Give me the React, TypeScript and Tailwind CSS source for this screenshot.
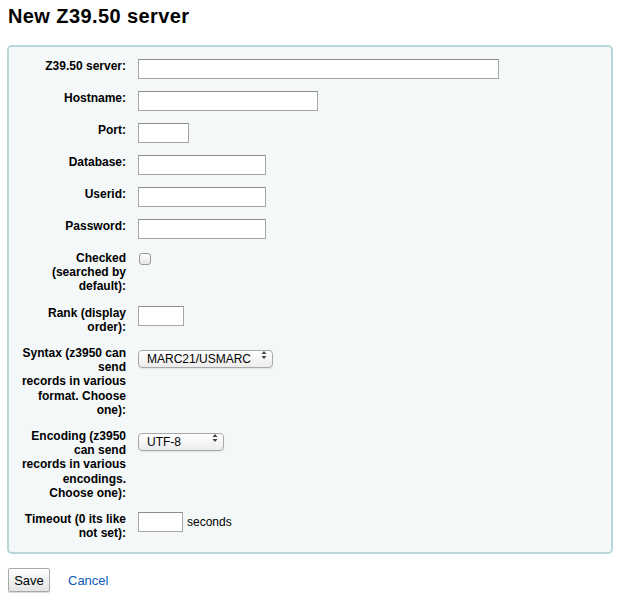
import { ReactNode } from "react";

const font = { fontFamily: '"Liberation Sans", Arial, sans-serif' };

interface RowProps {
  label: ReactNode;
  children: ReactNode;
}

const Row = ({ label, children }: RowProps) => (
  <li className="flex items-start">
    <label className="w-[117px] shrink-0 text-right text-[12px] font-bold leading-[14.2px] text-[#000]">
      {label}
    </label>
    <div className="ml-[12px] flex items-center">{children}</div>
  </li>
);

const TextInput = ({ width }: { width: string }) => (
  <input
    type="text"
    className={`${width} h-[20px] border border-[#a6a6a6] border-t-[#8e8e8e] bg-white px-1 text-[12px] outline-none`}
  />
);

const Select = ({ value, width }: { value: string; width: string }) => (
  <div className={`relative ${width}`}>
    <select
      defaultValue={value}
      className="h-[18px] w-full appearance-none rounded-[4px] border border-[#a9a9a9] bg-gradient-to-b from-white to-[#ececec] pl-[8px] text-[12px] leading-[16px] text-black shadow-[0_1px_1px_rgba(0,0,0,0.08)] outline-none"
    >
      <option>{value}</option>
    </select>
    <svg
      className="pointer-events-none absolute right-[6px] top-[4px]"
      width="6"
      height="10"
      viewBox="0 0 6 10"
      aria-hidden="true"
    >
      <path d="M3 1 L5.5 4 L0.5 4 Z" fill="#444" />
      <path d="M3 9 L5.5 6 L0.5 6 Z" fill="#444" />
    </svg>
  </div>
);

export default function App() {
  return (
    <div className="min-h-[599px] bg-white px-[7px] pt-[4px] text-black" style={font}>
      <h1 className="ml-[1px] text-[20px] font-bold leading-[24px] tracking-[0.4px]">New Z39.50 server</h1>

      <fieldset className="mt-[17px] w-[606px] rounded-[5px] border-2 border-[#b8d7d9] bg-[#f4f8f9] pt-[12px] pb-[12px]">
        <ol className="flex flex-col gap-[12px]">
          <Row label="Z39.50 server:">
            <TextInput width="w-[361px]" />
          </Row>
          <Row label="Hostname:">
            <TextInput width="w-[180px]" />
          </Row>
          <Row label="Port:">
            <TextInput width="w-[51px]" />
          </Row>
          <Row label="Database:">
            <TextInput width="w-[128px]" />
          </Row>
          <Row label="Userid:">
            <TextInput width="w-[128px]" />
          </Row>
          <Row label="Password:">
            <TextInput width="w-[128px]" />
          </Row>
          <Row
            label={
              <>
                Checked
                <br />
                (searched by
                <br />
                default):
              </>
            }
          >
            <input
              type="checkbox"
              className="ml-[1px] mt-[2px] h-[12px] w-[12px] appearance-none rounded-[3px] border border-[#9a9a9a] bg-gradient-to-b from-white to-[#e6e6e6]"
            />
          </Row>
          <Row
            label={
              <>
                Rank (display
                <br />
                order):
              </>
            }
          >
            <TextInput width="w-[46px]" />
          </Row>
          <Row
            label={
              <>
                Syntax (z3950 can
                <br />
                send
                <br />
                records in various
                <br />
                format. Choose
                <br />
                one):
              </>
            }
          >
            <Select value="MARC21/USMARC" width="w-[135px]" />
          </Row>
          <Row
            label={
              <>
                Encoding (z3950
                <br />
                can send
                <br />
                records in various
                <br />
                encodings.
                <br />
                Choose one):
              </>
            }
          >
            <Select value="UTF-8" width="w-[86px]" />
          </Row>
          <Row
            label={
              <>
                Timeout (0 its like
                <br />
                not set):
              </>
            }
          >
            <TextInput width="w-[45px]" />
            <span className="ml-[4px] text-[12px]">seconds</span>
          </Row>
        </ol>
      </fieldset>

      <div className="mt-[14px] flex items-center">
        <button
          type="button"
          className="ml-[1px] h-[24px] w-[42px] rounded-[2px] border border-[#a8a8a8] bg-gradient-to-b from-white to-[#e4e4e4] text-[13px] text-black shadow-[0_1px_1px_rgba(0,0,0,0.15)]"
        >
          Save
        </button>
        <a href="#" className="ml-[18px] text-[13px] text-[#0b5cb5]">
          Cancel
        </a>
      </div>
    </div>
  );
}
